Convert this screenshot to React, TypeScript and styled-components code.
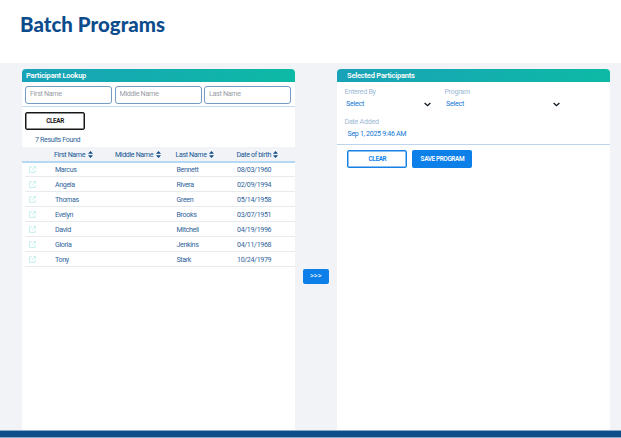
import React from "react";
import styled, { createGlobalStyle } from "styled-components";

const GlobalStyle = createGlobalStyle`
  * { box-sizing: border-box; }
  body { margin: 0; background: #fff; overflow: hidden; }
  button, input { font-family: inherit; }
`;

const Page = styled.div`
  width: 621px;
  height: 438px;
  display: flex;
  flex-direction: column;
  font-family: Roboto, sans-serif;
  font-size: 7.1px;
  line-height: 10px;
  letter-spacing: -0.36px;
  color: #2f649b;
  white-space: nowrap;
`;

const TopBar = styled.header`
  height: 63px;
  flex: none;
  padding: 12px 0 0 20px;
`;

const Title = styled.h1`
  margin: 0;
  font: 900 20.4px/25px Lato, sans-serif;
  letter-spacing: 0.05px;
  color: #0c4c8c;
`;

const Workspace = styled.main`
  flex: 1;
  display: grid;
  grid-template-columns: 273px 42px 273px;
  padding: 6px 11px 0 22px;
  background: #f1f3f7;
`;

const Panel = styled.section`
  background: #fff;
  border-radius: 4px 4px 0 0;
  overflow: hidden;
`;

const PanelHeader = styled.div<{ $indent: number }>`
  height: 13px;
  padding-left: ${(p) => p.$indent}px;
  background: linear-gradient(90deg, #19a2b8, #0dbaa5);
  color: #fff;
  font-size: 7.5px;
  font-weight: 600;
  line-height: 14px;
  letter-spacing: -0.2px;
`;

const SearchFields = styled.div`
  display: grid;
  grid-template-columns: repeat(3, 87px);
  gap: 2.5px;
  height: 25px;
  padding: 4px 0 0 3px;
  border-bottom: 1px solid #c4d9ee;
`;

const SearchInput = styled.input`
  width: 87px;
  height: 18px;
  padding: 0 4px 3px;
  border: 1px solid #739cc5;
  border-radius: 3px;
  outline: none;
  color: #2f649b;
  font-size: 7.2px;
  letter-spacing: -0.34px;
  &::placeholder { color: #999ea5; opacity: 1; }
`;

const Button = styled.button<{ $tone: "dark" | "outline" | "solid" }>`
  width: 60px;
  height: 17.5px;
  padding: 0;
  border: ${(p) => (p.$tone === "solid" ? "0" : "1.5px solid")};
  border-color: ${(p) => (p.$tone === "dark" ? "#151719" : "#1680e5")};
  border-radius: 2px;
  box-shadow: ${(p) => (p.$tone === "solid" ? "none" : `inset 0 0 0 0.5px ${p.$tone === "dark" ? "#151719" : "#1680e5"}`)};
  background: ${(p) => (p.$tone === "solid" ? "#0d7fe8" : "#fff")};
  color: ${(p) => ({ dark: "#111", outline: "#0d7fe8", solid: "#fff" })[p.$tone]};
  font-size: 6.4px;
  font-weight: 600;
  letter-spacing: -0.38px;
  line-height: 14px;
`;

const LookupActions = styled.div`
  height: 40px;
  padding: 5px 0 0 3px;
`;

const ResultCount = styled.div`
  margin-top: 5px;
  padding-left: 10px;
`;

const TableHead = styled.div`
  display: grid;
  grid-template-columns: 32px 61px 60.5px 61px 1fr;
  align-items: center;
  height: 16px;
  padding-top: 1px;
  background: #f1f3f7;
  border-bottom: 2px solid #b5d8f4;
  color: #175795;
`;

const HeadCell = styled.div`
  display: flex;
  align-items: center;
  gap: 2.5px;
`;

const TableBody = styled.div`
  margin: -1px 0 0 3px;
`;

const TableRow = styled.div`
  display: grid;
  grid-template-columns: 30px 61px 60.5px 60.5px 1fr;
  align-items: center;
  height: 15px;
  padding-top: 1px;
  border-bottom: 1px solid #e8ebed;
  svg { margin: -1px 0 0 4px; }
`;

const Transfer = styled.div`
  padding: 199.5px 0 0 7.5px;
`;

const TransferButton = styled(Button)`
  width: 26.5px;
  height: 15px;
  font-size: 7.4px;
  font-weight: 400;
  letter-spacing: 0;
`;

const FormGrid = styled.div`
  display: grid;
  grid-template-columns: 100px 129.5px;
  grid-template-rows: 29.5px 1fr;
  height: 63px;
  padding: 4px 0 0 7.5px;
  border-bottom: 1px solid #bed4eb;
`;

const Field = styled.div`
  display: flex;
  flex-direction: column;
`;

const FieldLabel = styled.label`
  color: #9db9d5;
  letter-spacing: -0.25px;
  line-height: 11px;
`;

const FieldValue = styled.div<{ $indent?: number }>`
  display: flex;
  align-items: center;
  justify-content: space-between;
  margin-top: 2px;
  padding: 0 14px 0 ${(p) => p.$indent ?? 1.5}px;
  color: #1477d5;
  letter-spacing: ${(p) => (p.$indent ? -0.32 : -0.25)}px;
`;

const FormActions = styled.div`
  display: flex;
  gap: 5px;
  padding: 5px 0 0 10.4px;
`;

const Footer = styled.footer`
  height: 8px;
  flex: none;
  background: #0d4d8a;
  border: solid #8ba9c7;
  border-width: 1px 0;
`;

const SortIcon = () => (
  <svg width="5" height="7" viewBox="0 0 5 7" fill="#124b86">
    <path d="M2.5 0 5 2.8H0ZM0 4.2h5L2.5 7Z" />
  </svg>
);

const OpenIcon = () => (
  <svg width="7" height="7" viewBox="0 0 7 7" fill="none" stroke="#aaeae5" strokeWidth=".7">
    <path d="M3 .8H.6v5.6h5.5V4M4.2.6h2.2v2.2M6.3.7 3.2 3.8" />
  </svg>
);

const Chevron = () => (
  <svg width="7" height="5" viewBox="0 0 7 5" fill="none" stroke="#101820" strokeWidth="1.35">
    <path d="m.6 1 2.9 2.7L6.4 1" />
  </svg>
);

const headings = ["First Name", "Middle Name", "Last Name", "Date of birth"];
const people = [
  ["Marcus", "Bennett", "08/03/1960"],
  ["Angela", "Rivera", "02/09/1994"],
  ["Thomas", "Green", "05/14/1958"],
  ["Evelyn", "Brooks", "03/07/1951"],
  ["David", "Mitchell", "04/19/1996"],
  ["Gloria", "Jenkins", "04/11/1968"],
  ["Tony", "Stark", "10/24/1979"],
];

export default function App() {
  return (
    <Page>
      <GlobalStyle />
      <TopBar><Title>Batch Programs</Title></TopBar>
      <Workspace>
        <Panel>
          <PanelHeader $indent={4}>Participant Lookup</PanelHeader>
          <SearchFields>
            {headings.slice(0, 3).map((name) => <SearchInput key={name} placeholder={name} />)}
          </SearchFields>
          <LookupActions>
            <Button $tone="dark">CLEAR</Button>
            <ResultCount>7 Results Found</ResultCount>
          </LookupActions>
          <TableHead>
            <span />
            {headings.map((name) => <HeadCell key={name}>{name}<SortIcon /></HeadCell>)}
          </TableHead>
          <TableBody>
            {people.map(([first, last, birth]) => (
              <TableRow key={first}>
                <OpenIcon /><span>{first}</span><span /><span>{last}</span><span>{birth}</span>
              </TableRow>
            ))}
          </TableBody>
        </Panel>
        <Transfer><TransferButton $tone="solid">&gt;&gt;&gt;</TransferButton></Transfer>
        <Panel>
          <PanelHeader $indent={10}>Selected Participants</PanelHeader>
          <FormGrid>
            <Field><FieldLabel>Entered By</FieldLabel><FieldValue>Select<Chevron /></FieldValue></Field>
            <Field><FieldLabel>Program</FieldLabel><FieldValue>Select<Chevron /></FieldValue></Field>
            <Field><FieldLabel>Date Added</FieldLabel><FieldValue $indent={3}>Sep 1, 2025 9:46 AM</FieldValue></Field>
          </FormGrid>
          <FormActions>
            <Button $tone="outline">CLEAR</Button>
            <Button $tone="solid">SAVE PROGRAM</Button>
          </FormActions>
        </Panel>
      </Workspace>
      <Footer />
    </Page>
  );
}
